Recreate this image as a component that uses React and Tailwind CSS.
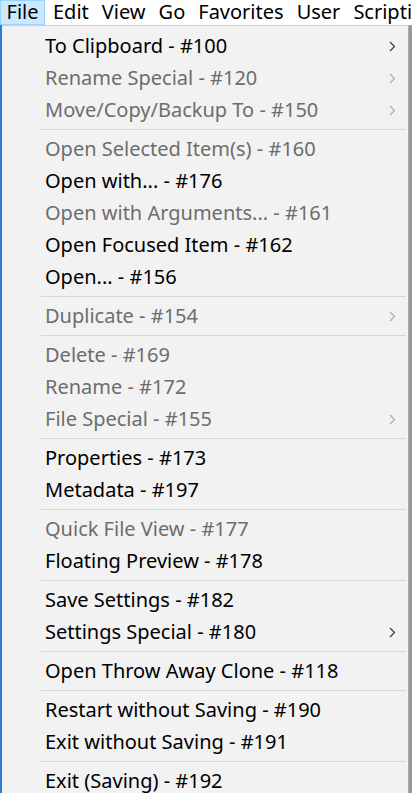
import React from "react";

const items = [
  { t: "To Clipboard - #100", sub: true },
  { t: "Rename Special - #120", d: true, sub: true },
  { t: "Move/Copy/Backup To - #150", d: true, sub: true },
  { sep: true },
  { t: "Open Selected Item(s) - #160", d: true },
  { t: "Open with... - #176" },
  { t: "Open with Arguments... - #161", d: true },
  { t: "Open Focused Item - #162" },
  { t: "Open... - #156" },
  { sep: true },
  { t: "Duplicate - #154", d: true, sub: true },
  { sep: true },
  { t: "Delete - #169", d: true },
  { t: "Rename - #172", d: true },
  { t: "File Special - #155", d: true, sub: true },
  { sep: true },
  { t: "Properties - #173" },
  { t: "Metadata - #197" },
  { sep: true },
  { t: "Quick File View - #177", d: true },
  { t: "Floating Preview - #178" },
  { sep: true },
  { t: "Save Settings - #182" },
  { t: "Settings Special - #180", sub: true },
  { sep: true },
  { t: "Open Throw Away Clone - #118" },
  { sep: true },
  { t: "Restart without Saving - #190" },
  { t: "Exit without Saving - #191" },
  { sep: true },
  { t: "Exit (Saving) - #192" },
];

function Chevron({ disabled }) {
  return (
    <svg width="7" height="11" viewBox="0 0 7 11" className="shrink-0">
      <polyline
        points="1,1 5.5,5.5 1,10"
        fill="none"
        stroke={disabled ? "#a8a8a8" : "#333333"}
        strokeWidth="1.1"
      />
    </svg>
  );
}

export default function App() {
  const menus = ["Edit", "View", "Go", "Favorites", "User", "Scripting"];
  return (
    <div className="w-[412px] h-[793px] overflow-hidden bg-white font-['Noto_Sans',sans-serif] text-[20px] text-black flex flex-col">
      <div className="h-[25px] flex items-stretch shrink-0 bg-white whitespace-nowrap overflow-hidden leading-[22px]">
        <div className="w-[45px] shrink-0 bg-[#cce8ff] border border-[#99d1ff] flex items-center justify-center pb-[1px]">
          File
        </div>
        <div className="flex shrink-0 items-center gap-[13px] pl-[8px] pb-[1px]">
          {menus.map((m) => (
            <span key={m}>{m}</span>
          ))}
        </div>
      </div>
      <div className="flex flex-1 min-h-0">
        <div className="w-[2px] bg-[#2b7fd4] shrink-0" />
        <div className="flex-1 bg-[#f2f2f2] border-t border-t-[#cfcfcf] border-r border-r-[#a9a9a9] pt-[4px] flex flex-col">
          {items.map((it, i) =>
            it.sep ? (
              <div key={i} className="h-[7px] flex items-center pl-[39px] pr-[2px] shrink-0">
                <div className="h-px w-full bg-[#d7d7d7]" />
              </div>
            ) : (
              <div
                key={i}
                className={`h-[32px] shrink-0 flex items-center pl-[43px] pr-[12px] whitespace-nowrap leading-[26px] ${
                  it.d ? "text-[#6d6d6d]" : "text-black"
                }`}
              >
                <span className="flex-1">{it.t}</span>
                {it.sub && <Chevron disabled={it.d} />}
              </div>
            )
          )}
        </div>
        <div className="w-[3px] bg-[#9a9a9a] shrink-0" />
      </div>
    </div>
  );
}
